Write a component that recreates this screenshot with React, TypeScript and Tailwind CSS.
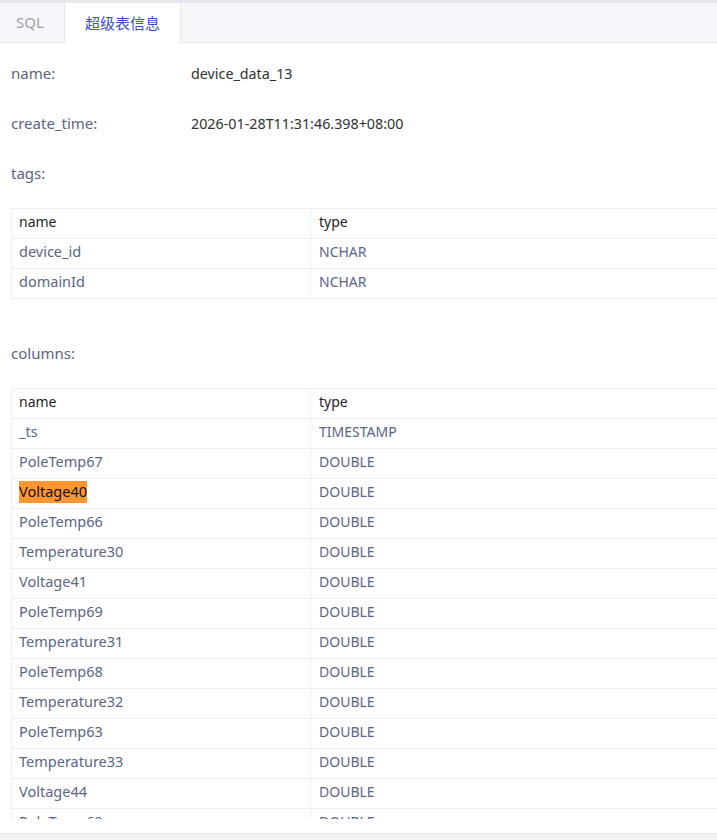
import React from "react";

type Field = { name: string; type: string };

const tags: Field[] = [
    { name: "device_id", type: "NCHAR" },
    { name: "domainId", type: "NCHAR" },
];

const columns: Field[] = [
    { name: "_ts", type: "TIMESTAMP" },
    { name: "PoleTemp67", type: "DOUBLE" },
    { name: "Voltage40", type: "DOUBLE" },
    { name: "PoleTemp66", type: "DOUBLE" },
    { name: "Temperature30", type: "DOUBLE" },
    { name: "Voltage41", type: "DOUBLE" },
    { name: "PoleTemp69", type: "DOUBLE" },
    { name: "Temperature31", type: "DOUBLE" },
    { name: "PoleTemp68", type: "DOUBLE" },
    { name: "Temperature32", type: "DOUBLE" },
    { name: "PoleTemp63", type: "DOUBLE" },
    { name: "Temperature33", type: "DOUBLE" },
    { name: "Voltage44", type: "DOUBLE" },
    { name: "PoleTemp62", type: "DOUBLE" },
    { name: "Voltage45", type: "DOUBLE" },
];

const HIGHLIGHT = "Voltage40";

function InfoRow({ label, value }: { label: string; value?: string }) {
    return (
        <div className="flex items-center h-[50px] pb-[1px]">
            <span className="w-[180px] shrink-0 text-[15px] text-[#5a6482]">{label}</span>
            {value && <span className="text-[14.3px] text-[#303133]">{value}</span>}
        </div>
    );
}

function FieldTable({ rows, className }: { rows: Field[]; className?: string }) {
    return (
        <div className={`w-[820px] border-t border-l border-[#ebeef5] text-[14px] ${className ?? ""}`}>
            <div className="grid grid-cols-[299px_1fr] h-[30px] border-b border-[#ebeef5] text-[#1f1f1f]">
                <div className="flex items-center pl-[7px] pb-[4px] border-r border-[#ebeef5]">name</div>
                <div className="flex items-center pl-2 pb-[4px]">type</div>
            </div>
            {rows.map((row) => (
                <div
                    key={row.name}
                    className="grid grid-cols-[299px_1fr] h-[30px] border-b border-[#ebeef5] text-[#5a6585]"
                >
                    <div className="flex items-center pl-[7px] pb-[3px] border-r border-[#ebeef5] text-[14.5px]">
                        {row.name === HIGHLIGHT ? (
                            <span className="bg-[#ff9632] text-[#111]">{row.name}</span>
                        ) : (
                            row.name
                        )}
                    </div>
                    <div className="flex items-center pl-2 pb-[4px]">{row.type}</div>
                </div>
            ))}
        </div>
    );
}

export default function App() {
    return (
        <div
            className="flex flex-col h-[840px] w-[717px] bg-white overflow-hidden"
            style={{ fontFamily: '"Noto Sans", "Noto Sans CJK SC", sans-serif' }}
        >
            <div className="h-[3px] shrink-0 bg-[#e4e7ed]" />
            <div className="flex h-[40px] shrink-0 bg-[#f5f7fa] border-b border-[#e4e7ed] text-[15px]">
                <div className="flex items-center w-[64px] justify-center pr-[4px] text-[#a0a3aa]">SQL</div>
                <div className="flex items-center px-5 h-[40px] bg-white border-x border-[#e4e7ed] text-[#3d4fc9]">
                    超级表信息
                </div>
            </div>
            <div className="flex-1 overflow-hidden pl-[11px] pt-[6px]">
                <InfoRow label="name:" value="device_data_13" />
                <InfoRow label="create_time:" value="2026-01-28T11:31:46.398+08:00" />
                <InfoRow label="tags:" />
                <FieldTable rows={tags} className="mt-[9px] mb-[30px]" />
                <InfoRow label="columns:" />
                <FieldTable rows={columns} className="mt-[9px]" />
            </div>
            <div className="h-[14px] shrink-0 bg-white" />
            <div className="h-[7px] shrink-0 bg-[#f2f3f5] border-t border-[#e4e7ed]" />
        </div>
    );
}
